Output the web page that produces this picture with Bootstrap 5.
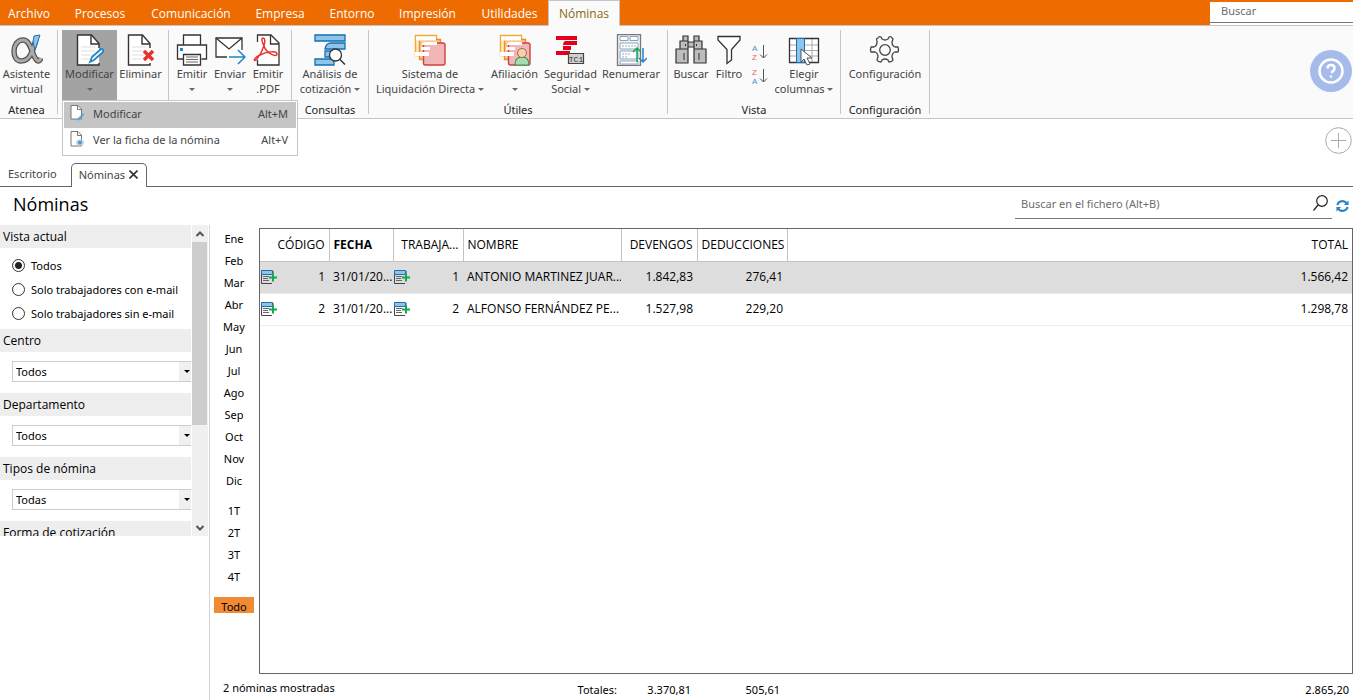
<!DOCTYPE html>
<html lang="es">
<head>
<meta charset="utf-8">
<meta name="viewport" content="width=device-width, initial-scale=1">
<title>Nóminas</title>
<link href="https://cdn.jsdelivr.net/npm/bootstrap@5.3.0/dist/css/bootstrap.min.css" rel="stylesheet">
<style>
  body { font-family: "Noto Sans", "Open Sans", sans-serif; font-size: 11px; line-height: 15px; color: #000; background: #fff; }
  button, input, select { font: inherit; color: inherit; }
  button { background: none; border: 0; padding: 0; }
  svg { display: block; flex: none; }

  /* menu bar */
  .menu-bar { background: #ed6b00; height: 26px; border-bottom: 1px solid #c6c6c6; }
  .menu-items { display: grid; grid-template-columns: 58px 84px 98px 80px 64px 87px 77px 72px; height: 26px; }
  .menu-items a { color: #fff; text-decoration: none; text-align: center; font-family: "Open Sans", sans-serif; font-size: 12px; line-height: 27px; }
  .menu-items a.active { background: #fafafa; color: #866a0a; border: 1px solid #c6c6c6; border-width: 1px 1px 0; line-height: 26px; }
  .menu-search { width: 143px; height: 21px; margin-top: 2px; border: 0; border-bottom: 1px solid #777; padding: 0 11px 3px; box-shadow: 0 2px 0 #fff; outline: 0; background: #fff; }
  .menu-search::placeholder, .file-search input::placeholder { color: #6d6d6d; opacity: 1; }

  /* ribbon */
  .ribbon { background: #fafafa; height: 93px; border-bottom: 1px solid #c6c6c6; padding-top: 4px; color: #444; }
  .ribbon-group { height: 84px; border-right: 1px solid #c6c6c6; padding: 0 4px; display: flex; flex-direction: column; }
  .ribbon-group.first { padding: 0 4px 0 0; }
  .ribbon-label { color: #222; text-align: center; margin-top: auto; line-height: 8px; }
  .tool { height: 70px; padding-top: 4px; display: flex; flex-direction: column; align-items: center; white-space: nowrap; }
  .tool svg.pic { width: 32px; height: 32px; }
  .tool.pressed { background: #a3a3a3; }
  .caret { display: inline-block; border: 3px solid transparent; border-top-color: #666; border-bottom: 0; vertical-align: 2px; }
  .tool > .caret { margin-top: 7px; }
  .w24 { width: 24px; } .w38 { width: 38px; } .w47 { width: 47px; } .w53 { width: 53px; } .w55 { width: 55px; } .w57 { width: 57px; }
  .w64 { width: 64px; } .w68 { width: 68px; } .w80 { width: 80px; } .w114 { width: 114px; }
  .help { width: 42px; height: 42px; border-radius: 50%; background: #a6bbea; margin: 20px 1px 0 0; }
  .sorters { padding-top: 13px; gap: 5px; }
  .glyph { font-family: "Liberation Sans", sans-serif; font-size: 8px; }

  /* drop-down under Modificar */
  .split { position: relative; }
  .split .dropdown-menu { top: 70px; left: 0; width: 236px; min-width: 0; margin: 0; padding: 1px; border: 1px solid #c6c6c6; border-radius: 0; background: #fff; font-size: 11px; }
  .split .dropdown-item { display: flex; align-items: center; height: 26px; padding: 0 8px 4px 6px; color: #444; }
  .split .dropdown-item.active { background: #c5c5c5; }

  /* document tabs */
  .tab-zone { height: 68px; border-bottom: 1px solid #666; color: #444; }
  .doc-tab { height: 24px; line-height: 22px; padding: 0 8px; color: #444; text-decoration: none; display: flex; align-items: center; }
  .doc-tab.active { border: 1px solid #666; border-bottom: 0; border-radius: 5px 5px 0 0; background: #fff; margin: 0 0 -1px 6px; width: 76px; padding: 0 8px 2px 7px; }

  .title-row { height: 38px; }
  .title-row h1 { font-size: 18px; line-height: 34px; margin: 0; padding-left: 13px; font-weight: 400; font-family: "Open Sans", sans-serif; }
  .file-search { width: 317px; height: 32px; border-bottom: 1px solid #777; }
  .file-search input { border: 0; outline: 0; padding: 2px 6px 0; background: none; }

  /* filter pane */
  .side { width: 210px; border-right: 1px solid #d4d4d4; }
  .side-scroll { height: 311px; overflow: hidden; }
  .side-body { width: 191px; }
  .side h2 { font: 12px/24px "Open Sans", sans-serif; height: 23px; background: #eee; margin: 0; padding-left: 3px; }
  .radios { padding: 5px 0 4px 12px; }
  .radios label { display: flex; align-items: center; height: 24px; gap: 6px; }
  .radios .form-check-input { width: 13px; height: 13px; margin: 0; border: 1px solid #333; background: #fff; box-shadow: none; }
  .radios .form-check-input:checked { background: radial-gradient(circle, #222 0 3px, #fff 4px); }
  .side .form-select { width: 179px; height: 21px; margin: 9px 0 11px 12px; padding: 0 14px 0 3px; border: 1px solid #ccc; border-right: 0; border-radius: 0; font-size: 11px; line-height: 19px; color: #000;
    background: #fff url("data:image/svg+xml,%3Csvg xmlns='http://www.w3.org/2000/svg' viewBox='0 0 12 19'%3E%3Cpath fill='%23f0f0f0' d='M0 0h12v19H0z'/%3E%3Cpath d='M5 8h6l-3 3z'/%3E%3C/svg%3E") no-repeat right 0 top 0 / 12px 19px; }
  .scroll-rail { width: 16px; margin-left: 1px; background: #f0f0f0; }
  .scroll-thumb { height: 183px; width: 15px; background: #cdcdcd; }

  /* period column */
  .months { width: 49px; padding: 3px 5px 0 4px; }
  .months button { display: block; width: 40px; height: 22px; line-height: 22px; text-align: center; }
  .months .gap-above { margin-top: 8px; }
  .months .current { background: #f08a33; height: 16px; line-height: 20px; margin-top: 9px; }

  /* payroll grid */
  .grid-box { border: 1px solid #666; margin-top: 3px; }
  .grid-table { table-layout: fixed; width: 100%; margin: 0; font: 12px/18px "Open Sans", sans-serif; color: #000; }
  .grid-table th, .grid-table td { height: 32px; padding: 0 4px; vertical-align: middle; white-space: nowrap; overflow: hidden; }
  .grid-table th { font-weight: 400; border: 1px solid #c3c3c3; border-width: 0 1px 1px 0; }
  .grid-table th:last-child { border-right: 0; }
  .grid-table td { border-bottom: 1px solid #ececec; }
  .grid-table tr.picked td { background: #ddd; }
  .with-icon { display: flex; align-items: center; justify-content: space-between; margin-left: -3px; }
  .totals { height: 26px; padding-left: 13px; line-height: 28px; }
  .totals span { text-align: right; padding-top: 2px; }
</style>
</head>
<body class="d-flex flex-column min-vh-100">

<svg width="0" height="0" class="position-absolute" aria-hidden="true">
  <symbol id="sheet" viewBox="0 0 32 32"><path d="M23 14V9.500L15.500 1H1.500v30H23v-2" fill="#fff" stroke="#333" stroke-width="1.400"/><path d="M15 1v9h8" fill="none" stroke="#333" stroke-width="1.400"/><path d="M5 13h14M5 17h14M5 21h12M5 25h9" stroke="#ddd"/></symbol>
  <symbol id="add-list" viewBox="0 0 16 14"><path d="M.5 1v12.500H11M12 1v4" fill="none" stroke="#444"/><path d="M.5.500h11v4H.5z" fill="#8ec3ea" stroke="#1f6fae"/><path d="M2 6.500h6M2 8.500h5M2 10.500h6" stroke="#666"/><path d="M12 3.500v8M8 7.500h8" stroke="#12a84b" stroke-width="2"/></symbol>
  <symbol id="ss-bars" viewBox="0 0 32 32"><path d="M1 1h30v6H1zM17 9h14v6H11q1-6 6-6zM11 17h9v6h-9zM1 25h15q3 0 4-1v7H1z"/></symbol>
  <symbol id="folders" viewBox="0 0 32 32"><path d="M1.500 1.500h21v20h-21z" fill="#fcebc2" stroke="#f2a92c" stroke-width="1.400"/><path d="M5.500 5.500h21v20h-21z" fill="#f9c98a" stroke="#ee8d2e" stroke-width="1.400"/><rect x="9.500" y="9" width="21.500" height="22" rx="2" fill="#f2b6b6" stroke="#cf3f3c" stroke-width="1.400"/><path d="M2 2.500h20v4H2zM11 8h12v3H8q0-3 3-3zM7 13h9v3H7zM1 18h14v4H1z" fill="#fff"/></symbol>
</svg>

<header class="menu-bar d-flex justify-content-between">
  <nav class="menu-items" aria-label="Menú principal">
    <a href="#">Archivo</a><a href="#">Procesos</a><a href="#">Comunicación</a><a href="#">Empresa</a><a href="#">Entorno</a><a href="#">Impresión</a><a href="#">Utilidades</a><a href="#" class="active">Nóminas</a>
  </nav>
  <input class="menu-search" type="search" placeholder="Buscar" aria-label="Buscar">
</header>

<div class="ribbon d-flex">
  <div class="ribbon-group first">
    <button class="tool w53"><svg class="pic" viewBox="0 0 32 32"><path d="M25 6C21 18 19 27 10 27 5 27 3 22 3 17S6 6 12 6c9 0 9 19 15 21q2 0 3-3" fill="none" stroke="#555" stroke-width="5.500"/><path d="M25 6C21 18 19 27 10 27 5 27 3 22 3 17S6 6 12 6c9 0 9 19 15 21q2 0 3-3" fill="none" stroke="#aaa" stroke-width="3"/><path d="M23 2l6-1-5 15-2-8z" fill="#8ec3ea" stroke="#1f6fae"/></svg>Asistente<br>virtual</button>
    <div class="ribbon-label">Atenea</div>
  </div>
  <div class="ribbon-group">
    <div class="d-flex">
      <div class="split">
        <button class="tool w55 pressed" aria-expanded="true"><svg class="pic" viewBox="0 0 32 32"><use href="#sheet" x="2"/><path d="M16 28l2-5 9-8q3 0 2 3l-9 8z" fill="#fff" stroke="#2583c6" stroke-width="1.800"/></svg>Modificar<span class="caret"></span></button>
        <div class="dropdown-menu show">
          <a class="dropdown-item active" href="#"><svg width="15" height="17" viewBox="0 0 30 34" class="me-2"><path d="M2 1h14l7 7v20H2z" fill="#fff" stroke="#777" stroke-width="2"/><path d="M15 1v8h8" fill="none" stroke="#777" stroke-width="2"/><path d="M15 30l12-12" stroke="#5ba4d8" stroke-width="4"/></svg>Modificar<span class="ms-auto">Alt+M</span></a>
          <a class="dropdown-item" href="#"><svg width="15" height="17" viewBox="0 0 30 34" class="me-2"><path d="M2 1h14l7 7v22H2z" fill="#fff" stroke="#777" stroke-width="2"/><path d="M15 1v8h8" fill="none" stroke="#777" stroke-width="2"/><ellipse cx="20" cy="23" rx="8" ry="6" fill="#b9d3e8"/><circle cx="20" cy="23" r="4" fill="#5b95c2"/></svg>Ver la ficha de la nómina<span class="ms-auto">Alt+V</span></a>
        </div>
      </div>
      <button class="tool w47"><svg class="pic" viewBox="0 0 32 32"><use href="#sheet" x="2"/><path d="M19 17l9 9M28 17l-9 9" stroke="#e8322f" stroke-width="3.500"/></svg>Eliminar</button>
    </div>
  </div>
  <div class="ribbon-group">
    <div class="d-flex">
      <button class="tool w38"><svg class="pic" viewBox="0 0 32 32"><path d="M7.500 11V1h17v10M7.500 25H1.500V11h29v14h-5" fill="#fff" stroke="#333" stroke-width="1.300"/><path d="M7.500 20.500h17V31h-17z" fill="#fff" stroke="#333" stroke-width="1.300"/><path d="M10 23h12M10 25.500h12M10 28h12" stroke="#666"/><path d="M4 14h3v3H4z" fill="#2583c6"/></svg>Emitir<span class="caret"></span></button>
      <button class="tool w38"><svg class="pic" viewBox="0 0 32 32"><path d="M13 23H2V4h26v12" fill="#fff" stroke="#333" stroke-width="1.300"/><path d="M2 4l13 11L28 4" fill="none" stroke="#333" stroke-width="1.300"/><path d="M15 23h15M24 16l7 7-7 7" fill="none" stroke="#2583c6" stroke-width="1.500"/></svg>Enviar<span class="caret"></span></button>
      <button class="tool w38"><svg class="pic" viewBox="0 0 32 32"><path d="M5.500 8V1H19l8 8v22H5.500v-5" fill="#fff" stroke="#333" stroke-width="1.300"/><path d="M18.500 1v9H27" fill="none" stroke="#333" stroke-width="1.300"/><path d="M11 4c4 0 1 12-6 21-4 4-4-1 3-4 6-3 17-5 17-1 0 4-11-1-13-8-2-4-3-8-1-8" fill="none" stroke="#e8322f" stroke-width="1.500"/></svg>Emitir<br>.PDF</button>
    </div>
  </div>
  <div class="ribbon-group">
    <button class="tool w68"><svg class="pic" viewBox="0 0 32 32"><use href="#ss-bars" fill="#8ec3ea" stroke="#1470b3" stroke-width="1.300"/><circle cx="21.500" cy="21" r="6" fill="#fff" stroke="#333" stroke-width="1.300"/><path d="M26 25.500l5 5" stroke="#333" stroke-width="1.500"/></svg>Análisis de<span>cotización <span class="caret"></span></span></button>
    <div class="ribbon-label">Consultas</div>
  </div>
  <div class="ribbon-group">
    <div class="d-flex">
      <button class="tool w114"><svg class="pic" viewBox="0 0 32 32"><use href="#folders"/></svg>Sistema de<span>Liquidación Directa <span class="caret"></span></span></button>
      <button class="tool w55"><svg class="pic" viewBox="0 0 32 32"><use href="#folders"/><path d="M16 31q0-8 7-8t7 8z" fill="#a8dcb0" stroke="#2b9b4a" stroke-width="1.200"/><circle cx="23" cy="19" r="4.500" fill="#f7cfae" stroke="#a06a44"/></svg>Afiliación<span class="caret"></span></button>
      <button class="tool w57"><svg class="pic" viewBox="0 0 32 32"><path d="M1 2h21v4H1zM10 7h12v4H8q0-3 2-4zM8 12h8v4H8zM1 17h14v4H1z" fill="#e2001a"/><path d="M13.500 19.500h15v10h-15z" fill="#d0d0d0" stroke="#444" stroke-width="1.200"/><text x="21" y="27.500" text-anchor="middle" font-family="Liberation Mono, monospace" font-size="8" fill="#333">TC1</text></svg>Seguridad<span>Social <span class="caret"></span></span></button>
      <button class="tool w64"><svg class="pic" viewBox="0 0 32 32"><path d="M2.500.500h23v31h-23z" fill="#f2f5f8" stroke="#777" stroke-width="1.300"/><path d="M5 2.500h8v4H5zM15 2.500h8v4h-8zM5 9h18v6H5zM5 17h18v8H5zM5 27h18v3H5z" fill="#fff" stroke="#8aa4bd"/><path d="M7 12h14M7 20h8M7 23h6" stroke="#9ab" stroke-dasharray="2 1"/><path d="M22 28V14m-4 4l4-4 4 4" fill="none" stroke="#12a84b" stroke-width="1.500"/><path d="M28 14v14m-4-4l4 4 4-4" fill="none" stroke="#2583c6" stroke-width="1.500"/></svg>Renumerar</button>
    </div>
    <div class="ribbon-label">Útiles</div>
  </div>
  <div class="ribbon-group">
    <div class="d-flex">
      <button class="tool w38"><svg class="pic" viewBox="0 0 32 32"><path d="M8 2h5v5H8zM19 2h5v5h-5zM13 8h6v5h-6zM5 7h8v8H5zM19 7h8v8h-8zM1 15h12v14H1zM19 15h12v14H19z" fill="#bdbdbd" stroke="#333" stroke-width="1.200"/><path d="M9 19v7M24 19v7M10.500 10v2M21.500 10v2" stroke="#333"/></svg>Buscar</button>
      <button class="tool w38"><svg class="pic" viewBox="0 0 32 32"><path d="M5 2.500h22V6l-8.500 9.500V26L14 29.500v-14L5 6z" fill="#fff" stroke="#333" stroke-width="1.300"/></svg>Filtro</button>
      <div class="w24 sorters d-flex flex-column align-items-center">
        <button aria-label="Orden ascendente"><svg width="16" height="19" viewBox="0 0 16 19" class="glyph"><text x="0" y="8" fill="#3f93d0">A</text><text x="0" y="17" fill="#e56361">Z</text><path d="M11.500 2v13M8 11.500l3.500 3.500 3.500-3.500" fill="none" stroke="#555"/></svg></button>
        <button aria-label="Orden descendente"><svg width="16" height="19" viewBox="0 0 16 19" class="glyph"><text x="0" y="8" fill="#e56361">Z</text><text x="0" y="17" fill="#3f93d0">A</text><path d="M11.500 2v13M8 11.500l3.500 3.500 3.500-3.500" fill="none" stroke="#555"/></svg></button>
      </div>
      <button class="tool w64"><svg class="pic" viewBox="0 0 32 32"><path d="M1.500 4.500h29v24h-29z" fill="#fff"/><path d="M2 11h28M2 16.500h28M2 22h28M16.500 5v23M24 5v23" stroke="#aaa"/><path d="M1.500 4.500h29v24h-29z" fill="none" stroke="#333" stroke-width="1.300"/><path d="M8.500 4.500h8v24h-8z" fill="#8ec3ea" stroke="#1470b3"/><path d="M13 15v13l3-3 3 6 3-1-3-6h5z" fill="#fff" stroke="#555"/></svg>Elegir<span>columnas <span class="caret"></span></span></button>
    </div>
    <div class="ribbon-label">Vista</div>
  </div>
  <div class="ribbon-group">
    <button class="tool w80"><svg class="pic" viewBox="0 0 32 32" fill="none" stroke="#444" stroke-width="1.300"><path d="M9 4q1-2 3-1l1 2q3 2 6 0l1-2q2-1 3 1l1 1-1 3q0 4 3 5h3q1 3 0 5h-3q-3 1-3 5l1 3q-1 2-4 2l-1-2q-3-2-6 0l-1 2q-3 0-4-2l1-3q0-4-3-5H2q-1-2 0-5h3q3-1 3-5L7.500 5z" stroke-linejoin="round"/><circle cx="16" cy="16" r="5.300"/></svg>Configuración</button>
    <div class="ribbon-label">Configuración</div>
  </div>
  <button class="help ms-auto d-flex align-items-center justify-content-center" aria-label="Ayuda"><svg width="26" height="26" viewBox="0 0 26 26" fill="none" stroke="#fff" stroke-width="2.500"><circle cx="13" cy="13" r="11.500"/><path d="M9.500 10.500q0-3.500 3.500-3.500t3.500 3-3.500 4.500"/><path d="M13 17.500v2"/></svg></button>
</div>

<div class="tab-zone d-flex align-items-end justify-content-between">
  <nav class="d-flex align-items-end" aria-label="Pestañas">
    <a class="doc-tab" href="#">Escritorio</a>
    <a class="doc-tab active" href="#">Nóminas<svg width="9" height="9" viewBox="0 0 9 9" class="ms-auto"><path d="M.5.500l8 8M8.500.500l-8 8" stroke="#333" stroke-width="1.600"/></svg></a>
  </nav>
  <button class="align-self-start mt-2" aria-label="Añadir"><svg width="28" height="27" viewBox="0 0 28 27" fill="none" stroke="#aaa"><circle cx="13.500" cy="13.500" r="12.800"/><path d="M13.500 6v15M6 13.500h15"/></svg></button>
</div>

<main class="d-flex flex-column flex-grow-1">
  <div class="title-row d-flex justify-content-between">
    <h1>Nóminas</h1>
    <div class="d-flex">
      <div class="file-search d-flex align-items-center">
        <input class="flex-grow-1" type="search" placeholder="Buscar en el fichero (Alt+B)" aria-label="Buscar en el fichero">
        <button class="me-1" aria-label="Buscar"><svg width="15" height="16" viewBox="0 0 15 16" fill="none" stroke="#222" stroke-width="1.200"><circle cx="9" cy="6" r="5.300"/><path d="M5 10L.5 15.500"/></svg></button>
      </div>
      <button class="px-1" aria-label="Actualizar"><svg width="13" height="14" viewBox="0 0 14 14" fill="none" stroke="#2583c6" stroke-width="2.200"><path d="M1.500 6a5.500 5 0 0 1 10-2M12.500 8a5.500 5 0 0 1-10 2"/><path d="M13.500 1v5h-5zM.5 13V8h5z" fill="#2583c6" stroke="none"/></svg></button>
    </div>
  </div>

  <div class="d-flex flex-grow-1">
    <aside class="side flex-shrink-0">
      <div class="side-scroll d-flex">
        <div class="side-body">
          <h2>Vista actual</h2>
          <div class="radios">
            <label><input class="form-check-input" type="radio" name="vista" checked>Todos</label>
            <label><input class="form-check-input" type="radio" name="vista">Solo trabajadores con e-mail</label>
            <label><input class="form-check-input" type="radio" name="vista">Solo trabajadores sin e-mail</label>
          </div>
          <h2><label for="centro">Centro</label></h2>
          <select class="form-select" id="centro"><option>Todos</option></select>
          <h2><label for="depto">Departamento</label></h2>
          <select class="form-select" id="depto"><option>Todos</option></select>
          <h2><label for="tipos">Tipos de nómina</label></h2>
          <select class="form-select" id="tipos"><option>Todas</option></select>
          <h2>Forma de cotización</h2>
        </div>
        <div class="scroll-rail d-flex flex-column" aria-hidden="true">
          <svg width="16" height="17" viewBox="0 0 16 17" fill="none" stroke="#555" stroke-width="2"><path d="M4.500 11L8 7.500l3.500 3.500"/></svg>
          <div class="scroll-thumb"></div>
          <svg class="mt-auto" width="16" height="17" viewBox="0 0 16 17" fill="none" stroke="#555" stroke-width="2"><path d="M4.500 7L8 10.500 11.500 7"/></svg>
        </div>
      </div>
    </aside>

    <div class="flex-grow-1 d-flex flex-column">
      <div class="d-flex flex-grow-1">
        <div class="months flex-shrink-0">
          <button>Ene</button><button>Feb</button><button>Mar</button><button>Abr</button><button>May</button><button>Jun</button><button>Jul</button><button>Ago</button><button>Sep</button><button>Oct</button><button>Nov</button><button>Dic</button>
          <button class="gap-above">1T</button><button>2T</button><button>3T</button><button>4T</button>
          <button class="current">Todo</button>
        </div>
        <div class="grid-box flex-grow-1">
          <table class="grid-table">
            <colgroup><col width="69"><col width="64"><col width="70"><col width="158"><col width="76"><col width="90"><col></colgroup>
            <thead><tr><th class="text-end">CÓDIGO</th><th class="fw-bold">FECHA</th><th class="text-end">TRABAJA...</th><th>NOMBRE</th><th class="text-end">DEVENGOS</th><th class="text-end">DEDUCCIONES</th><th class="text-end">TOTAL</th></tr></thead>
            <tbody>
              <tr class="picked"><td><div class="with-icon"><svg width="16" height="14"><use href="#add-list"/></svg>1</div></td><td>31/01/20...</td><td><div class="with-icon"><svg width="16" height="14"><use href="#add-list"/></svg>1</div></td><td>ANTONIO MARTINEZ JUAR...</td><td class="text-end">1.842,83</td><td class="text-end">276,41</td><td class="text-end">1.566,42</td></tr>
              <tr><td><div class="with-icon"><svg width="16" height="14"><use href="#add-list"/></svg>2</div></td><td>31/01/20...</td><td><div class="with-icon"><svg width="16" height="14"><use href="#add-list"/></svg>2</div></td><td>ALFONSO FERNÁNDEZ PE...</td><td class="text-end">1.527,98</td><td class="text-end">229,20</td><td class="text-end">1.298,78</td></tr>
            </tbody>
          </table>
        </div>
      </div>
      <div class="totals d-flex">
        <div class="flex-shrink-0" style="width:300px">2 nóminas mostradas</div><span style="width:94px">Totales:</span><span style="width:74px">3.370,81</span><span style="width:89px">505,61</span><span class="ms-auto pe-1">2.865,20</span>
      </div>
    </div>
  </div>
</main>
<script src="https://cdn.jsdelivr.net/npm/bootstrap@5.3.0/dist/js/bootstrap.bundle.min.js"></script>
</body>
</html>
